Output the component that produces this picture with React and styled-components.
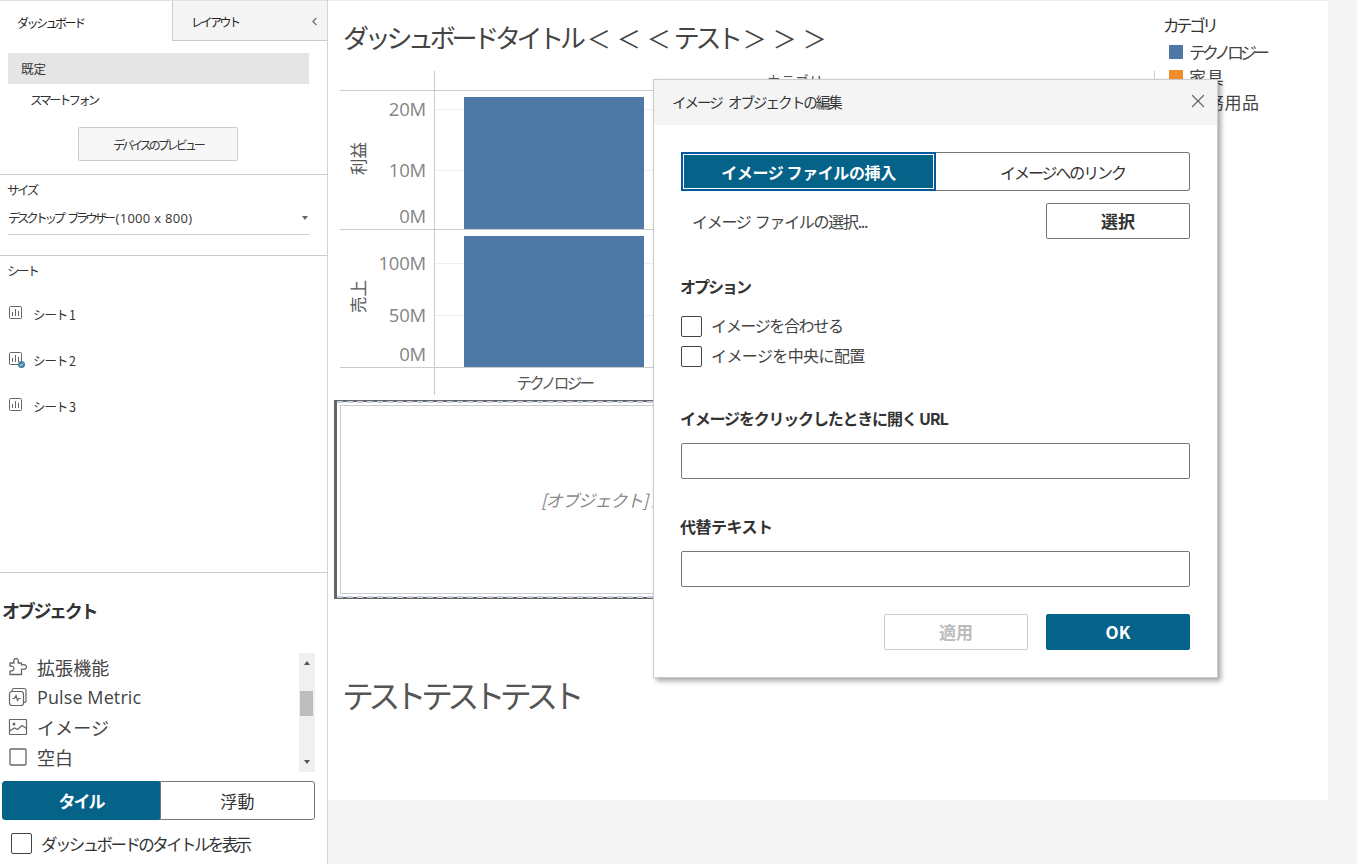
import React from "react";
import styled, { createGlobalStyle } from "styled-components";
import { ChevronLeft, X } from "lucide-react";

const GlobalStyle = createGlobalStyle`
  html, body {
    margin: 0;
    padding: 0;
    background: #f4f4f4;
  }
  * {
    box-sizing: border-box;
  }
  body {
    font-family: "Noto Sans CJK JP", "Open Sans", sans-serif;
    color: #333;
    overflow: hidden;
  }
`;

const TEAL = "#05638a";

const Page = styled.div`
  display: flex;
  width: 1357px;
  height: 864px;
  position: relative;
  overflow: hidden;
`;

/* ---------- side panel ---------- */

const Side = styled.aside`
  width: 328px;
  height: 864px;
  flex: none;
  background: #fff;
  border-right: 1px solid #d4d4d4;
  display: flex;
  flex-direction: column;
`;

const Tabs = styled.div`
  display: flex;
  height: 41px;
  border-top: 1px solid #e0e0e0;
`;

const Tab = styled.div`
  width: ${(p) => (p.$active ? "172px" : "155px")};
  display: flex;
  align-items: center;
  justify-content: space-between;
  font-size: 12px;
  letter-spacing: -2.5px;
  padding-left: ${(p) => (p.$active ? "17px" : "18px")};
  padding-right: 6px;
  padding-top: 2px;
  color: #222;
  background: ${(p) => (p.$active ? "#fff" : "#f5f5f5")};
  border-left: ${(p) => (p.$active ? "none" : "1px solid #ccc")};
  border-bottom: ${(p) => (p.$active ? "none" : "1px solid #ccc")};
`;

const DeviceSection = styled.section`
  height: 134px;
  padding-top: 12px;
  border-bottom: 1px solid #ccc;
  display: flex;
  flex-direction: column;
`;

const DeviceRow = styled.div`
  height: 31px;
  margin: 0 18px 0 8px;
  display: flex;
  align-items: center;
  font-size: 12.5px;
  letter-spacing: ${(p) => (p.$active ? "0" : "-2.8px")};
  padding-left: ${(p) => (p.$active ? "13px" : "22px")};
  background: ${(p) => (p.$active ? "#e5e5e5" : "transparent")};
`;

const PreviewButton = styled.button`
  width: 160px;
  height: 34px;
  margin: 12px 0 0 78px;
  padding: 0;
  background: #f7f7f7;
  border: 1px solid #ccc;
  border-radius: 2px;
  font-family: inherit;
  font-size: 12px;
  letter-spacing: -3px;
  color: #333;
`;

const SizeSection = styled.section`
  height: 81px;
  padding: 5px 18px 0 8px;
  border-bottom: 1px solid #ccc;
`;

const SmallLabel = styled.div`
  font-size: 12.5px;
  line-height: 20px;
  letter-spacing: -2.4px;
  margin-left: -1px;
  color: #333;
`;

const SizeSelect = styled.div`
  height: 33px;
  margin-top: 2px;
  padding: 0 1px 1px 0;
  display: flex;
  align-items: center;
  justify-content: space-between;
  border-bottom: 1px solid #ccc;
  font-size: 12.5px;
  letter-spacing: -3.4px;
  word-spacing: 5px;
`;

const SizeValue = styled.span`
  font-family: "Open Sans", sans-serif;
  font-size: 13px;
  letter-spacing: 0.3px;
  word-spacing: 0;
  margin-left: 3px;
`;

const Caret = styled.span`
  width: 0;
  height: 0;
  border-left: 3.5px solid transparent;
  border-right: 3.5px solid transparent;
  border-top: 4px solid #666;
`;

const SizeText = styled.span`
  display: flex;
  align-items: center;
  white-space: pre;
`;

const SheetSection = styled.section`
  height: 317px;
  padding: 5px 8px 0;
  border-bottom: 1px solid #ccc;
`;

const SheetRows = styled.div`
  margin-top: 10px;
`;

const SheetRow = styled.div`
  height: 46px;
  display: flex;
  align-items: center;
  gap: 8px;
  padding-left: 1px;
  font-size: 12.5px;
  letter-spacing: -1.1px;
  color: #333;
`;

const ObjectSection = styled.section`
  flex: 1;
  padding-left: 2px;
  display: flex;
  flex-direction: column;
`;

const ObjectTitle = styled.h3`
  margin: 24px 0 0;
  font-size: 18px;
  line-height: 26px;
  font-weight: 700;
  letter-spacing: -2.3px;
  color: #333;
`;

const ObjectList = styled.div`
  margin-top: 30px;
  width: 313px;
  height: 119px;
  display: flex;
`;

const ObjectRows = styled.div`
  flex: 1;
  margin-top: -1px;
  padding: 0 0 0 6px;
  display: flex;
  flex-direction: column;
`;

const ObjectRow = styled.div`
  height: 30px;
  display: flex;
  align-items: center;
  gap: 9px;
  font-size: 18px;
  color: #444;
  font-family: "Open Sans", "Noto Sans CJK JP", sans-serif;
  letter-spacing: 0.1px;
`;

const Scrollbar = styled.div`
  width: 16px;
  background: #f0f0f0;
  display: flex;
  flex-direction: column;
  align-items: center;
  justify-content: space-between;
  padding: 8px 0;
  position: relative;
`;

const ScrollArrow = styled.span`
  width: 0;
  height: 0;
  border-left: 3.5px solid transparent;
  border-right: 3.5px solid transparent;
  ${(p) => (p.$up ? "border-bottom" : "border-top")}: 4px solid #555;
`;

const ScrollThumb = styled.span`
  position: absolute;
  top: 38px;
  left: 1px;
  width: 13px;
  height: 25px;
  background: #bdbdbd;
`;

const ToggleGroup = styled.div`
  width: 313px;
  height: 39px;
  margin-top: 9px;
  display: flex;
`;

const ToggleOption = styled.div`
  flex: ${(p) => (p.$active ? "0 0 158px" : "1")};
  display: flex;
  align-items: center;
  justify-content: center;
  font-size: 17px;
  font-weight: ${(p) => (p.$active ? 700 : 400)};
  letter-spacing: ${(p) => (p.$active ? "-2px" : "0.3px")};
  color: ${(p) => (p.$active ? "#fff" : "#333")};
  background: ${(p) => (p.$active ? TEAL : "#fff")};
  border: 1px solid ${(p) => (p.$active ? TEAL : "#777")};
  border-radius: ${(p) => (p.$active ? "3px 0 0 3px" : "0 3px 3px 0")};
`;

const TitleCheck = styled.label`
  display: flex;
  align-items: center;
  gap: 9px;
  margin: 13px 0 0 9px;
  font-size: 16.5px;
  line-height: 20px;
  letter-spacing: -2.6px;
  color: #333;
`;

const CheckBox = styled.span`
  width: 21px;
  height: 21px;
  flex: none;
  background: #fff;
  border: 1px solid #444;
  border-radius: 2px;
`;

/* ---------- dashboard canvas ---------- */

const Canvas = styled.main`
  width: 1000px;
  height: 800px;
  flex: none;
  background: #fff;
  border-top: 1px solid #eee;
  display: flex;
`;

const Board = styled.div`
  width: 827px;
  flex: none;
  display: flex;
  flex-direction: column;
`;

const BoardTitle = styled.h1`
  margin: 0;
  height: 70px;
  padding: 15px 0 0 15px;
  font-size: 26px;
  line-height: 42px;
  font-weight: 400;
  letter-spacing: -4.3px;
  color: #444;
  white-space: nowrap;
`;

const Angle = styled.span`
  font-size: 24px;
  letter-spacing: 6px;
  margin: 0 ${(p) => p.$right}px 0 ${(p) => p.$left}px;
`;

const Chart = styled.div`
  margin-left: 12px;
  width: 815px;
  display: grid;
  grid-template-columns: 95px 720px;
  grid-template-rows: 20px 139px 138px 27px;
  border-right: 1px solid #ccc;
`;

const ChartHeader = styled.div`
  grid-column: 1 / 3;
  padding-left: 94px;
  border-bottom: 1px solid #ccc;
`;

const HeaderInner = styled.div`
  height: 20px;
  border-left: 1px solid #ccc;
  text-align: center;
  font-size: 14px;
  line-height: 18px;
  color: #555;
  overflow: hidden;
`;

const AxisCell = styled.div`
  position: relative;
  border-bottom: 1px solid #ccc;
  border-right: 1px solid #ccc;
`;

const AxisTitle = styled.span`
  position: absolute;
  left: 8px;
  top: ${(p) => p.$top}px;
  writing-mode: vertical-rl;
  text-orientation: sideways;
  transform: rotate(180deg);
  font-size: 16.5px;
  line-height: 20px;
  color: #555;
`;

const TickLabel = styled.span`
  position: absolute;
  right: 8px;
  top: ${(p) => p.$top}px;
  transform: translateY(calc(-50% - 1px));
  font-family: "Open Sans", sans-serif;
  font-size: 18.5px;
  letter-spacing: -0.2px;
  color: #858585;
`;

const Pane = styled.div`
  position: relative;
  border-bottom: 1px solid #ccc;
  display: grid;
  grid-template-columns: repeat(3, 1fr);
`;

const GridLine = styled.span`
  position: absolute;
  left: 0;
  right: 0;
  top: ${(p) => p.$top}px;
  height: 1px;
  background: #efefef;
`;

const BarSlot = styled.div`
  position: relative;
  display: flex;
  align-items: flex-end;
  justify-content: center;
`;

const Bar = styled.div`
  width: 180px;
  margin-right: 2px;
  background: ${(p) => p.$color};
`;

const ChartFooter = styled.div`
  grid-column: 2;
  display: grid;
  grid-template-columns: repeat(3, 1fr);
  border-left: 1px solid #ccc;
  margin-left: -1px;
  padding-right: 4px;
  font-size: 15.5px;
  letter-spacing: -2.7px;
  line-height: 28px;
  text-align: center;
  color: #555;
`;

const ObjectBox = styled.div`
  position: relative;
  margin: 5px 0 0 6px;
  width: 821px;
  height: 199px;
  border: 2px solid #666;
  border-left-width: 3px;
  padding: 3px;
`;

const ObjectDash = styled.div`
  position: absolute;
  left: 0;
  right: 0;
  top: -1px;
  bottom: -1px;
  border-top: 2px dashed #c3cde0;
  border-bottom: 2px dashed #c3cde0;
`;

const ObjectInner = styled.div`
  height: 100%;
  border: 1px solid #ccc;
  display: flex;
  align-items: center;
  padding-left: 200px;
  font-size: 17px;
  font-style: italic;
  letter-spacing: -0.9px;
  color: #8a8a8a;
  white-space: nowrap;
`;

const BottomTitle = styled.div`
  margin: 68px 0 0 14px;
  font-size: 32px;
  line-height: 54px;
  letter-spacing: -5.7px;
  color: #555;
`;

const Legend = styled.div`
  padding: 13px 0 0 8px;
`;

const LegendTitle = styled.div`
  font-size: 16.5px;
  line-height: 22px;
  letter-spacing: -3.4px;
  color: #333;
  margin-bottom: 3px;
`;

const LegendItem = styled.div`
  height: 25px;
  display: flex;
  align-items: center;
  gap: 6px;
  padding-left: 6px;
  font-size: 17px;
  letter-spacing: ${(p) => (p.$kana ? "-4px" : "0.7px")};
  color: #444;
`;

const Swatch = styled.span`
  width: 14px;
  height: 14px;
  background: ${(p) => p.$color};
`;

/* ---------- dialog ---------- */

const Dialog = styled.div`
  position: absolute;
  left: 653px;
  top: 79px;
  width: 565px;
  height: 599px;
  background: #fff;
  border: 1px solid #ccc;
  box-shadow: 3px 3px 5px rgba(0, 0, 0, 0.35);
  display: flex;
  flex-direction: column;
`;

const DialogHeader = styled.div`
  height: 45px;
  flex: none;
  background: #f4f4f4;
  display: flex;
  align-items: center;
  justify-content: space-between;
  padding: 0 8px 3px 18px;
  font-size: 14.5px;
  letter-spacing: -1.95px;
  color: #333;
`;

const HeaderGap = styled.span`
  display: inline-block;
  width: 6px;
`;

const DialogBody = styled.div`
  padding: 27px 27px 0 27px;
  display: flex;
  flex-direction: column;
`;

const Segments = styled.div`
  display: flex;
  height: 39px;
`;

const Segment = styled.div`
  flex: ${(p) => (p.$active ? "0 0 255px" : "1")};
  display: flex;
  align-items: center;
  justify-content: center;
  font-size: 16px;
  letter-spacing: ${(p) => (p.$active ? "-0.4px" : "-2.1px")};
  font-weight: ${(p) => (p.$active ? 700 : 400)};
  color: ${(p) => (p.$active ? "#fff" : "#333")};
  background: ${(p) => (p.$active ? TEAL : "#fff")};
  border: ${(p) => (p.$active ? "none" : "1px solid #777")};
  border-left: none;
  border-radius: ${(p) => (p.$active ? "0" : "0 3px 3px 0")};
  outline: ${(p) => (p.$active ? "1px solid #fff" : "none")};
  outline-offset: -3px;
  box-shadow: ${(p) => (p.$active ? "inset 0 0 0 2px #0559a0" : "none")};
`;

const FileRow = styled.div`
  display: flex;
  align-items: center;
  justify-content: space-between;
  margin-top: 12px;
  padding-left: 11px;
  font-size: 16px;
  letter-spacing: -1.3px;
  word-spacing: 2px;
  color: #444;
`;

const DialogButton = styled.button`
  width: 144px;
  height: 36px;
  padding: 0 0 2px;
  font-family: inherit;
  font-size: 17px;
  font-weight: 700;
  border-radius: 2px;
  color: ${(p) => (p.$primary ? "#fff" : p.$disabled ? "#bbb" : "#333")};
  background: ${(p) => (p.$primary ? TEAL : "#fff")};
  border: 1px solid ${(p) => (p.$primary ? TEAL : p.$disabled ? "#ccc" : "#777")};
`;

const GroupLabel = styled.div`
  margin: ${(p) => p.$top}px 0 0 -1px;
  font-size: 16px;
  line-height: 24px;
  font-weight: 700;
  letter-spacing: ${(p) => p.$track}px;
  color: #333;
`;

const OptionRow = styled.label`
  display: flex;
  align-items: center;
  gap: 9px;
  height: 21px;
  margin-top: ${(p) => p.$top}px;
  font-size: 16px;
  letter-spacing: ${(p) => p.$track}px;
  color: #444;
`;

const OptionText = styled.span`
  margin-top: -4px;
`;

const TextInput = styled.div`
  height: 36px;
  margin-top: 13px;
  border: 1px solid #777;
  border-radius: 2px;
`;

const DialogFooter = styled.div`
  display: flex;
  justify-content: flex-end;
  gap: 18px;
  margin-top: 27px;
`;

/* ---------- icons ---------- */

const SheetIcon = ({ done }) => (
  <svg width="16" height="16" viewBox="0 0 16 16" fill="none">
    <rect x="0.5" y="0.5" width="12" height="12" rx="1" stroke="#666" />
    <path d="M3.5 6v4M6.5 3v7M9.5 5v5" stroke="#666" />
    {done && (
      <>
        <circle cx="12.5" cy="12.5" r="3.5" fill="#3d83a5" />
        <path d="M10.8 12.5l1.2 1.2 2.2-2.3" stroke="#fff" strokeWidth="1" />
      </>
    )}
  </svg>
);

const PuzzleIcon = () => (
  <svg width="20" height="20" viewBox="0 0 20 20" fill="none" stroke="#666" strokeWidth="1.3">
    <path d="M2 6H6C5 3.5 6.3 1.5 8 1.5C9.7 1.5 11 3.5 10 6H13.5V8C16 7 18.5 8 18.5 10C18.5 12 16 13 13.5 12V17.5H2V14C4 14.5 6 13.2 6 11.5C6 9.8 4 8.5 2 9Z" strokeLinejoin="round" />
  </svg>
);

const PulseIcon = () => (
  <svg width="20" height="20" viewBox="0 0 20 20" fill="none" stroke="#666" strokeWidth="1.2">
    <path d="M4 4.5V3.5a2 2 0 0 1 2-2h10a2 2 0 0 1 2 2v10a2 2 0 0 1-2 2" />
    <rect x="1.5" y="4.5" width="14" height="14" rx="2.5" />
    <path d="M4.5 11.5h2l1.5-3 1.5 5 1.2-2h2" />
  </svg>
);

const ImageIcon = () => (
  <svg width="20" height="20" viewBox="0 0 20 20" fill="none" stroke="#666" strokeWidth="1.2">
    <rect x="1.5" y="2.5" width="17" height="15" rx="0.5" />
    <circle cx="6" cy="7" r="1.5" fill="#666" stroke="none" />
    <path d="M1.5 14l5-3 3 1.5 4.5-4 4.5 3" />
  </svg>
);

const BlankIcon = () => (
  <svg width="20" height="20" viewBox="0 0 20 20" fill="none" stroke="#666" strokeWidth="1.3">
    <rect x="2" y="2" width="16" height="16" rx="1" />
  </svg>
);

const sheets = [
  { name: "シート 1" },
  { name: "シート 2", done: true },
  { name: "シート 3" },
];

const objects = [
  { name: "拡張機能", icon: <PuzzleIcon /> },
  { name: "Pulse Metric", icon: <PulseIcon /> },
  { name: "イメージ", icon: <ImageIcon /> },
  { name: "空白", icon: <BlankIcon /> },
];

const categories = [
  { name: "テクノロジー", color: "#4e79a7", kana: true },
  { name: "家具", color: "#f28e2b" },
  { name: "事務用品", color: "#e15759" },
];

const panes = [
  {
    title: "利益",
    titleTop: 51,
    ticks: [{ label: "20M", top: 18 }, { label: "10M", top: 79 }, { label: "0M", top: 125 }],
    bars: [132, 52, 78],
  },
  {
    title: "売上",
    titleTop: 50,
    ticks: [{ label: "100M", top: 33 }, { label: "50M", top: 85 }, { label: "0M", top: 124 }],
    bars: [131, 96, 100],
  },
];

export default function App() {
  return (
    <Page>
      <GlobalStyle />
      <Side>
        <Tabs>
          <Tab $active>ダッシュボード</Tab>
          <Tab>
            レイアウト
            <ChevronLeft size={13} color="#666" />
          </Tab>
        </Tabs>
        <DeviceSection>
          <DeviceRow $active>既定</DeviceRow>
          <DeviceRow>スマートフォン</DeviceRow>
          <PreviewButton>デバイスのプレビュー</PreviewButton>
        </DeviceSection>
        <SizeSection>
          <SmallLabel>サイズ</SmallLabel>
          <SizeSelect>
            <SizeText>
              デスクトップ ブラウザー
              <SizeValue>(1000 x 800)</SizeValue>
            </SizeText>
            <Caret />
          </SizeSelect>
        </SizeSection>
        <SheetSection>
          <SmallLabel>シート</SmallLabel>
          <SheetRows>
            {sheets.map((s) => (
              <SheetRow key={s.name}>
                <SheetIcon done={s.done} />
                {s.name}
              </SheetRow>
            ))}
          </SheetRows>
        </SheetSection>
        <ObjectSection>
          <ObjectTitle>オブジェクト</ObjectTitle>
          <ObjectList>
            <ObjectRows>
              {objects.map((o) => (
                <ObjectRow key={o.name}>
                  {o.icon}
                  {o.name}
                </ObjectRow>
              ))}
            </ObjectRows>
            <Scrollbar>
              <ScrollArrow $up />
              <ScrollThumb />
              <ScrollArrow />
            </Scrollbar>
          </ObjectList>
          <ToggleGroup>
            <ToggleOption $active>タイル</ToggleOption>
            <ToggleOption>浮動</ToggleOption>
          </ToggleGroup>
          <TitleCheck>
            <CheckBox />
            ダッシュボードのタイトルを表示
          </TitleCheck>
        </ObjectSection>
      </Side>

      <Canvas>
        <Board>
          <BoardTitle>
            ダッシュボードタイトル
            <Angle $left={5} $right={-3}>＜＜＜</Angle>
            テスト
            <Angle $left={4} $right={0}>＞＞＞</Angle>
          </BoardTitle>
          <Chart>
            <ChartHeader>
              <HeaderInner>カテゴリ</HeaderInner>
            </ChartHeader>
            {panes.map((pane) => (
              <React.Fragment key={pane.title}>
                <AxisCell>
                  <AxisTitle $top={pane.titleTop}>{pane.title}</AxisTitle>
                  {pane.ticks.map((t) => (
                    <TickLabel key={t.label} $top={t.top}>
                      {t.label}
                    </TickLabel>
                  ))}
                </AxisCell>
                <Pane>
                  {pane.ticks.slice(0, 2).map((t) => (
                    <GridLine key={t.label} $top={t.top} />
                  ))}
                  {categories.map((c, i) => (
                    <BarSlot key={c.name}>
                      <Bar $color={c.color} style={{ height: pane.bars[i] }} />
                    </BarSlot>
                  ))}
                </Pane>
              </React.Fragment>
            ))}
            <ChartFooter>
              {categories.map((c) => (
                <span key={c.name}>{c.name}</span>
              ))}
            </ChartFooter>
          </Chart>
          <ObjectBox>
            <ObjectDash />
            <ObjectInner>[オブジェクト] スペース</ObjectInner>
          </ObjectBox>
          <BottomTitle>テストテストテスト</BottomTitle>
        </Board>
        <Legend>
          <LegendTitle>カテゴリ</LegendTitle>
          {categories.map((c) => (
            <LegendItem key={c.name} $kana={c.kana}>
              <Swatch $color={c.color} />
              {c.name}
            </LegendItem>
          ))}
        </Legend>
      </Canvas>

      <Dialog>
        <DialogHeader>
          <span>
            イメージ<HeaderGap />オブジェクトの編集
          </span>
          <X size={22} color="#666" strokeWidth={1.3} />
        </DialogHeader>
        <DialogBody>
          <Segments>
            <Segment $active>イメージ ファイルの挿入</Segment>
            <Segment>イメージへのリンク</Segment>
          </Segments>
          <FileRow>
            イメージ ファイルの選択...
            <DialogButton>選択</DialogButton>
          </FileRow>
          <GroupLabel $top={35} $track={-2}>オプション</GroupLabel>
          <OptionRow $top={18} $track={-1.35}>
            <CheckBox />
            <OptionText>イメージを合わせる</OptionText>
          </OptionRow>
          <OptionRow $top={9} $track={-0.6}>
            <CheckBox />
            <OptionText>イメージを中央に配置</OptionText>
          </OptionRow>
          <GroupLabel $top={39} $track={-1.2}>イメージをクリックしたときに開く URL</GroupLabel>
          <TextInput />
          <GroupLabel $top={35} $track={-0.5}>代替テキスト</GroupLabel>
          <TextInput />
          <DialogFooter>
            <DialogButton $disabled>適用</DialogButton>
            <DialogButton $primary>OK</DialogButton>
          </DialogFooter>
        </DialogBody>
      </Dialog>
    </Page>
  );
}
